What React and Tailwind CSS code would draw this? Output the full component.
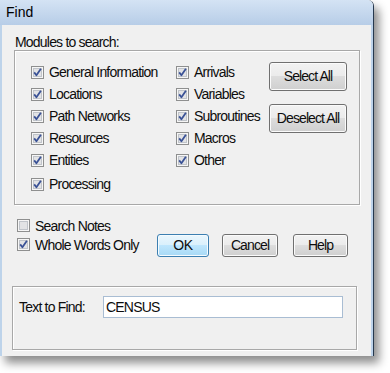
import React from "react";

const CheckBox = ({ checked }) => (
  <svg width="13" height="13" viewBox="0 0 13 13" className="shrink-0">
    <rect x="0.5" y="0.5" width="12" height="12" fill="#f6f6f6" stroke="#8e8f8f" />
    <rect x="2.5" y="2.5" width="8" height="8" fill="#e2e3e5" stroke="#c0c4ca" />
    {checked && (
      <path d="M3.2 6.4 L5.4 9.2 L9.9 2.8" stroke="#3a5296" strokeWidth="1.8" fill="none" strokeLinejoin="round" />
    )}
  </svg>
);

const Option = ({ label, checked = true, h = "h-[22px]" }) => (
  <div className={`flex items-center gap-[5px] ${h}`}>
    <CheckBox checked={checked} />
    <span className="leading-none">{label}</span>
  </div>
);

const btn =
  "flex items-center justify-center rounded-[3px] border border-[#707070] bg-[linear-gradient(#f2f2f2,#ebebeb_50%,#dddddd_50%,#cfcfcf)] shadow-[inset_0_0_0_1px_#fbfbfb] tracking-[-0.9px]";

const App = () => {
  const leftCol = ["General Information", "Locations", "Path Networks", "Resources", "Entities"];
  const rightCol = ["Arrivals", "Variables", "Subroutines", "Macros", "Other"];

  return (
    <div className="w-[390px] h-[373px] bg-white font-['Liberation_Sans',Arial,sans-serif] text-[14px] tracking-[-0.8px] text-[#0d0d0d]">
      <div className="w-[374px] h-[356px] flex flex-col rounded-tr-[6px] border-r border-[#26384d] shadow-[5px_7px_10px_rgba(0,0,0,0.45)] overflow-hidden">
        {/* title bar */}
        <div className="h-[25px] shrink-0 bg-linear-to-b from-[#d4e3f4] to-[#b7cde7] flex items-center pl-[6px] text-[14px] tracking-normal text-black">
          Find
        </div>

        <div className="flex-1 bg-[#f0f0f0] border-l-2 border-r-2 border-[#bdd3ea] flex flex-col">
          <div className="mt-[9px] ml-[13px] leading-[16px]">Modules to search:</div>

          {/* modules group */}
          <div className="ml-[12px] w-[346px] h-[155px] shrink-0 border border-[#a8a8a8] shadow-[inset_1px_1px_0_#fff,1px_1px_0_#fff] flex pl-[16px] pt-[10px]">
            <div className="w-[146px] flex flex-col">
              {leftCol.map((l) => (
                <Option key={l} label={l} />
              ))}
              <div className="mt-[2px]">
                <Option label="Processing" />
              </div>
            </div>
            <div className="w-[92px] flex flex-col">
              {rightCol.map((l) => (
                <div key={l} className="-ml-[1px]">
                  <Option label={l} />
                </div>
              ))}
            </div>
            <div className="mt-[1px] flex flex-col gap-[13px]">
              <button className={`${btn} w-[78px] h-[29px]`}>Select All</button>
              <button className={`${btn} w-[78px] h-[29px]`}>Deselect All</button>
            </div>
          </div>

          {/* options + buttons */}
          <div className="mt-[11px] flex items-start">
            <div className="ml-[15px] w-[140px] flex flex-col">
              <Option label="Search Notes" checked={false} h="h-[19px]" />
              <Option label="Whole Words Only" h="h-[19px]" />
            </div>
            <div className="mt-[18px] flex">
              <button className="w-[52px] h-[23px] flex items-center justify-center rounded-[3px] border border-[#3c7fb1] bg-[linear-gradient(#eaf6fd,#d9f0fc_50%,#bee6fd_50%,#a7d9f5)] shadow-[inset_0_0_0_1px_#f4fbff] tracking-[-0.3px]">
                OK
              </button>
              <button className={`${btn} ml-[13px] w-[56px] h-[23px]`}>Cancel</button>
              <button className={`${btn} ml-[15px] w-[55px] h-[23px]`}>Help</button>
            </div>
          </div>

          {/* text to find group */}
          <div className="mt-[29px] ml-[10px] w-[345px] h-[64px] shrink-0 border border-[#a8a8a8] shadow-[inset_1px_1px_0_#fff,1px_1px_0_#fff] pl-[6px] pt-[9px]">
            <div className="flex items-center h-[22px]">
              <span className="w-[84px] shrink-0">Text to Find:</span>
              <div className="w-[240px] h-[22px] border border-[#a9bdd3] bg-white flex items-center pl-[2px]">
                CENSUS
              </div>
            </div>
          </div>
        </div>
      </div>
    </div>
  );
};

export default App;
